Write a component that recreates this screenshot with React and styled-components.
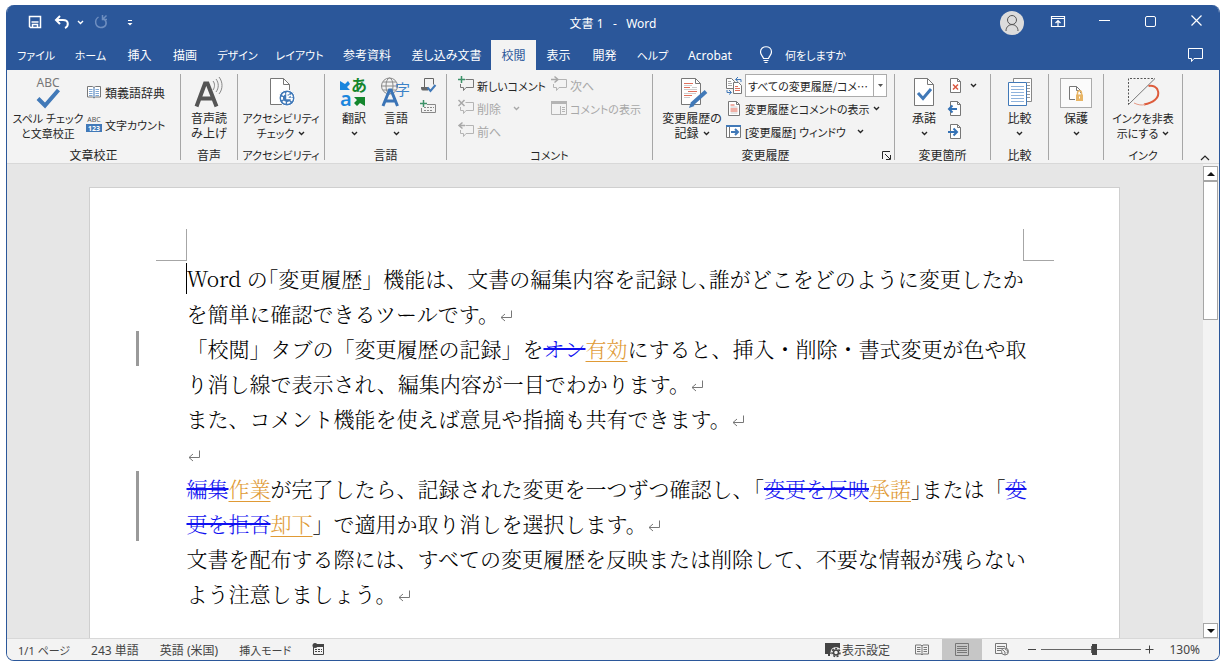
import styled, {createGlobalStyle} from "styled-components";
import {useState} from "react";

const GlobalStyle = createGlobalStyle`
    * {
        box-sizing: border-box;
    }

    body {
        margin: 0;
        background: #fff;
        font-family: "Noto Sans", "Noto Sans CJK JP", sans-serif;
        font-size: 12px;
        color: #262626;
    }

    button, select {
        font: inherit;
        color: inherit;
        border: none;
        background: none;
        padding: 0;
        margin: 0;
        cursor: pointer;
        font-feature-settings: "palt";
    }

    svg {
        display: block;
        flex: none;
        overflow: visible;
    }
`

const Screen = styled.div`
    height: 100vh;
    padding: 5px 7px 5px 6px;
`

const Window = styled.div`
    height: 100%;
    display: flex;
    flex-direction: column;
    border: 1px solid #2b579a;
    border-top: none;
    border-radius: 8px;
    overflow: hidden;
    background: #e6e6e6;
    font-feature-settings: "palt";
`

const TitleBar = styled.header`
    display: grid;
    grid-template-columns: 1fr auto 1fr;
    align-items: center;
    flex: none;
    height: 35px;
    background: #2b579a;
    color: #fff;
`

const QuickAccess = styled.div`
    display: flex;
    align-items: center;
    padding-left: 16px;
`

const QuickButton = styled.button`
    display: flex;
    align-items: center;
    justify-content: center;
    width: ${props => props.$width || 24}px;
    height: 24px;
    color: ${props => props.$dim ? "#6e8ec0" : "#fff"};
`

const Title = styled.div`
    white-space: pre;
    line-height: 16px;
    padding-top: 2px;
`

const WindowButtons = styled.div`
    display: flex;
    align-items: center;
    justify-content: flex-end;
`

const WindowButton = styled.button`
    display: flex;
    align-items: center;
    justify-content: center;
    width: 46px;
    height: 33px;
`

const Avatar = styled.button`
    width: 24px;
    height: 24px;
    margin-right: 11px;
    border-radius: 50%;
    background: #dcdcdc;
    display: flex;
    align-items: center;
    justify-content: center;
`

const TabBar = styled.nav`
    display: flex;
    flex: none;
    height: 30px;
    padding-left: 1px;
    background: #2b579a;
    color: #fff;
`

const Tab = styled.button`
    width: ${props => props.$width}px;
    height: 31px;
    flex: none;
    white-space: nowrap;
    font-size: ${props => props.$kana ? 11 : 12}px;
    line-height: 31px;

    &.active {
        background: #f3f3f3;
        color: #2b579a;
    }
`

const TellMe = styled.button`
    display: flex;
    align-items: center;
    gap: 12px;
    margin-left: 16px;
    font-size: 11px;
    white-space: nowrap;
`

const CommentButton = styled.button`
    margin-left: auto;
    width: 46px;
    display: flex;
    align-items: center;
    justify-content: center;
`

const Ribbon = styled.section`
    display: flex;
    flex: none;
    height: 94px;
    padding-top: 4px;
    background: #f3f3f3;
    border-bottom: 1px solid #d8d8d8;
`

const Group = styled.div`
    display: flex;
    flex-direction: column;
    flex: none;
    width: ${props => props.$width}px;
`

const GroupBody = styled.div`
    display: flex;
    justify-content: ${props => props.$start ? "flex-start" : "center"};
    padding-left: ${props => props.$start || 0}px;
    height: 74px;
`

const GroupLabel = styled.div`
    position: relative;
    font-size: ${props => props.$kana ? 11 : 12}px;
    line-height: 15px;
    text-align: center;
    white-space: nowrap;
    padding-right: ${props => props.$launcher ? 16 : 0}px;
`

const Separator = styled.div`
    flex: none;
    width: 1px;
    height: 86px;
    background: #a6a6a6;
`

const BigButton = styled.button`
    display: flex;
    flex-direction: column;
    align-items: center;
    flex: none;
    width: ${props => props.$width}px;
    padding-top: 1px;
    white-space: nowrap;
    font-size: ${props => props.$kana ? 11 : 12}px;
    line-height: 15px;
`

const BigIcon = styled.span`
    display: flex;
    align-items: center;
    justify-content: center;
    height: 36px;
`

const BigLine = styled.span`
    display: flex;
    align-items: center;
    gap: 4px;
    height: 15px;
`

const Column = styled.div`
    display: flex;
    flex-direction: column;
    gap: ${props => props.$gap || 0}px;
    padding-top: ${props => props.$top || 0}px;
    margin-left: ${props => props.$left || 0}px;
`

const SmallButton = styled.button`
    display: flex;
    align-items: center;
    gap: 3px;
    height: 23px;
    font-size: ${props => props.$kana ? 11 : 12}px;
    white-space: nowrap;

    &:disabled {
        color: #a8a8a8;
    }
`

const ComboRow = styled.div`
    display: flex;
    align-items: center;
    gap: 3px;
    height: 23px;
`

const Combo = styled.div`
    display: grid;
    grid-template-columns: 127px 13px;
    height: 23px;
    background: #fff;
    border: 1px solid #ababab;
`

const ComboSelect = styled.select`
    grid-area: 1 / 1 / 2 / 3;
    appearance: none;
    width: 140px;
    padding-left: 2px;
    font-family: "Noto Sans CJK JP", sans-serif;
    font-size: 11px;
    outline: none;
`

const ComboArrow = styled.span`
    grid-area: 1 / 2 / 2 / 3;
    display: flex;
    align-items: center;
    justify-content: center;
    border-left: 1px solid #ababab;
    pointer-events: none;
`

const Launcher = styled.button`
    position: absolute;
    right: 3px;
    top: 4px;
`

const ProtectBox = styled.span`
    display: flex;
    align-items: center;
    justify-content: center;
    width: 32px;
    height: 30px;
    border: 1px solid #ababab;
    background: #fbfbfb;
`

const Collapse = styled.button`
    margin: auto 9px 2px auto;
`

const Workspace = styled.main`
    display: flex;
    flex: 1;
    min-height: 0;
`

const Canvas = styled.div`
    flex: 1;
    min-width: 0;
    padding: 23px 2px 0 0;
    overflow: hidden;
    display: flex;
    justify-content: center;
`

const Page = styled.article`
    width: 100%;
    max-width: 1031px;
    background: #fff;
    border: 1px solid #cfcfcf;
    border-bottom: none;
    padding: 41px 65px 0 46px;
    overflow: hidden;
`

const CropMarks = styled.div`
    display: flex;
    justify-content: space-between;
    padding-left: 20px;
`

const CropMark = styled.span`
    width: 31px;
    height: 32px;
    border-bottom: 1px solid #a6a6a6;
    border-left: ${props => props.$right ? "1px solid #a6a6a6" : "none"};
    border-right: ${props => props.$right ? "none" : "1px solid #a6a6a6"};
`

const Paragraph = styled.p`
    margin: 0;
    color: #000;
    font-family: "Noto Serif CJK JP", "Noto Sans CJK JP", "Liberation Serif", serif;
    font-size: 21px;
    font-weight: 300;
    font-feature-settings: normal;
`

const Line = styled.span`
    display: block;
    height: 35px;
    padding: 2px 0 0 48px;
    line-height: 31px;
    white-space: nowrap;
    border-left: 3px solid ${props => props.$changed ? "#9a9a9a" : "transparent"};

    svg {
        display: inline-block;
        vertical-align: -5px;
    }
`

const Caret = styled.span`
    display: inline-block;
    width: 1px;
    height: 31px;
    margin-left: -1px;
    vertical-align: top;
    background: #000;
`

// half-width punctuation, used where a full line would run past the margin
const Tight = styled.span`
    font-feature-settings: "halt";
`

const Deleted = styled.del`
    color: #1010f0;
    text-decoration: line-through 2px;
`

const Inserted = styled.ins`
    color: #e09a35;
    text-decoration: underline 1px;
    text-underline-offset: 4px;
`

const ScrollBar = styled.div`
    display: flex;
    flex-direction: column;
    flex: none;
    width: 16px;
    padding-top: 2px;
    background: #f3f3f3;
`

const ScrollButton = styled.button`
    display: flex;
    align-items: center;
    justify-content: center;
    flex: none;
    width: 15px;
    height: 15px;
    background: #fff;
    border: 1px solid #a6a6a6;
`

const ScrollThumb = styled.div`
    width: 15px;
    height: 139px;
    margin-bottom: auto;
    background: #fff;
    border: 1px solid #a6a6a6;
`

const StatusBar = styled.footer`
    display: flex;
    align-items: center;
    flex: none;
    height: 22px;
    padding-left: 11px;
    padding-right: 19px;
    background: #f3f3f3;
    border-top: 1px solid #d8d8d8;
    color: #444;
    white-space: nowrap;
`

const StatusItem = styled.button`
    display: flex;
    align-items: center;
    height: 21px;
    margin-right: 21px;
    font-size: ${props => props.$kana ? 11 : 12}px;
`

const StatusRight = styled.div`
    display: flex;
    align-items: center;
    margin-left: auto;
`

const DisplaySettings = styled.button`
    display: flex;
    align-items: center;
    height: 21px;
    margin-right: 12px;
`

const ViewButton = styled.button`
    display: flex;
    align-items: center;
    justify-content: center;
    width: 40px;
    height: 21px;
    background: ${props => props.$active ? "#c6c6c6" : "none"};
`

const ZoomSlider = styled.input`
    appearance: none;
    width: 100px;
    height: 11px;
    margin: 0 4px;
    background: linear-gradient(#666, #666) center / 100% 1px no-repeat, linear-gradient(#666, #666) center / 1px 7px no-repeat;

    &::-webkit-slider-thumb {
        appearance: none;
        width: 5px;
        height: 11px;
        background: #444;
    }
`

const ZoomValue = styled.button`
    width: 34px;
    margin-left: 12px;
    text-align: right;
`

const tabs = [
    {title: "ファイル", width: 56, kana: true},
    {title: "ホーム", width: 53, kana: true},
    {title: "挿入", width: 45},
    {title: "描画", width: 46},
    {title: "デザイン", width: 59, kana: true},
    {title: "レイアウト", width: 65, kana: true},
    {title: "参考資料", width: 70},
    {title: "差し込み文書", width: 89},
    {title: "校閲", width: 45},
    {title: "表示", width: 45},
    {title: "開発", width: 47},
    {title: "ヘルプ", width: 49, kana: true},
    {title: "Acrobat", width: 66},
]

function Svg ({w, h, children}) {
    return (
        <svg width={w} height={h} viewBox={`0 0 ${w} ${h}`} fill="none" stroke="currentColor" aria-hidden="true">
            {children}
        </svg>
    )
}

function Chevron () {
    return <Svg w={7} h={5}><path d="M1 1l2.5 2.5L6 1" strokeWidth="1.4"/></Svg>
}

function SpellIcon () {
    return (
        <Svg w={30} h={34}>
            <text x="15" y="11" textAnchor="middle" fontSize="12" fill="#777" stroke="none">ABC</text>
            <path d="M5 22.500l7 7L25.500 14" stroke="#4179b8" strokeWidth="4"/>
        </Svg>
    )
}

function ThesaurusIcon () {
    return (
        <Svg w={16} h={16}>
            <path d="M1.500 1.500h5l1.500 1 1.500-1h5v10.500h-5l-1.500 1-1.500-1h-5z" fill="#fff" stroke="#777"/>
            <path d="M8 2.500v10" stroke="#4179b8"/>
            <path d="M3 4.500h3.500M3 6.500h3.500M3 8.500h3.500M3 10.500h3.500M9.500 4.500h3.500M9.500 6.500h3.500M9.500 8.500h3.500M9.500 10.500h3.500" stroke="#7ea6d3"/>
        </Svg>
    )
}

function WordCountIcon () {
    return (
        <Svg w={16} h={17}>
            <text x="8" y="6" textAnchor="middle" fontSize="7" fill="#555" stroke="none">ABC</text>
            <path d="M0 8h16v8H0z" fill="#4179b8" stroke="none"/>
            <text x="8" y="15" textAnchor="middle" fontSize="7" fontWeight="700" fill="#fff" stroke="none">123</text>
        </Svg>
    )
}

function ReadAloudIcon () {
    return (
        <Svg w={32} h={34}>
            <path d="M3.500 30.500L12 7.500h2.500L23.500 30.500M7 22.500h13" stroke="#555" strokeWidth="4"/>
            <path d="M20 5c2 2.500 2 6 0 9M23 3c3 4 3 9 0 13M26 1c4 5 4 12 0 17" stroke="#888"/>
        </Svg>
    )
}

function SheetIcon ({children}) {
    return (
        <Svg w={32} h={34}>
            <path d="M6.500 2.500h13l6 6v21h-19z" fill="#fff" stroke="#777"/>
            <path d="M19.500 2.500v6h6" stroke="#777"/>
            {children}
        </Svg>
    )
}

function AccessibilityIcon () {
    return (
        <Svg w={32} h={34}>
            <path d="M5.500 2.500h13l6 6v20h-19z" fill="#fff" stroke="#777"/>
            <path d="M18.500 2.500v6h6" stroke="#777"/>
            <circle cx="22" cy="22" r="8" fill="#4179b8" stroke="#fff"/>
            <circle cx="22" cy="22" r="5" stroke="#fff" strokeWidth="2" strokeDasharray="3 1.500"/>
            <path d="M22 17v5.500h5M22 22l3-3" stroke="#fff" strokeWidth="1.500"/>
        </Svg>
    )
}

function TranslateIcon () {
    return (
        <Svg w={32} h={34}>
            <text x="2" y="30" fontSize="20" fontWeight="600" fill="#1b86dd" stroke="none">a</text>
            <text x="13" y="15" fontSize="16" fontWeight="700" fill="#14862d" stroke="none">あ</text>
            <path d="M2 5v9h10l-3-3 3-3-2-3-3 3z" fill="#1b86dd" stroke="none"/>
            <path d="M27 30v-9H16l3 3-3 3 3 3 3-3z" fill="#14862d" stroke="none"/>
        </Svg>
    )
}

function LanguageIcon () {
    return (
        <Svg w={32} h={34}>
            <g stroke="#8a8a8a">
                <circle cx="9.500" cy="10" r="8"/>
                <ellipse cx="9.500" cy="10" rx="3.500" ry="8"/>
                <path d="M1.500 10h16M3 6h13M3 14h13"/>
            </g>
            <path d="M3 30L9.500 14h1.500l6.500 16M5.500 25h10" stroke="#3b74b6" strokeWidth="3"/>
            <text x="15" y="19" fontSize="15" fill="#3b82c8" stroke="none">字</text>
        </Svg>
    )
}

function ProofLanguageIcon () {
    return (
        <Svg w={16} h={16}>
            <path d="M4.500 9V.5h9v6" stroke="#666"/>
            <path d="M1 9h7v3.500H3c-2 0-2-2-2-3.500z" fill="#666" stroke="none"/>
            <path d="M7.500 9.500l3 3.500 5-6" stroke="#4179b8" strokeWidth="2"/>
        </Svg>
    )
}

function KeyboardIcon () {
    return (
        <Svg w={16} h={16}>
            <path d="M7 3.500h8.500v8H1.500V7" stroke="#888"/>
            <path d="M4 6.500h10M4 9.500h9" stroke="#888" strokeDasharray="2 1"/>
            <path d="M3.500 -1v7M0 2.500h7" stroke="#3c9168" strokeWidth="1.500"/>
        </Svg>
    )
}

// type: new | delete | prev | next
function CommentIcon ({type}) {
    const gray = type === "new" ? "#777" : "#b4b4b4"
    return (
        <Svg w={16} h={16}>
            <path d="M7.500 1.500h8v8H8l-2.500 3v-3h-3V6" stroke={gray}/>
            {type === "new" && <path d="M3.500 -2v7M0 1.500h7" stroke="#3c9168" strokeWidth="1.500"/>}
            {type === "delete" && <path d="M.5 -1l6 6M6.500 -1l-6 6" stroke="#a8a8a8" strokeWidth="1.500"/>}
            {type === "prev" && <path d="M4.500 -1.500L1 1.500l3.500 3M1 1.500h6" stroke="#a8a8a8" strokeWidth="1.500"/>}
            {type === "next" && <path d="M3.500 -1.500L7 1.500l-3.500 3M0 1.500h7" stroke="#a8a8a8" strokeWidth="1.500"/>}
        </Svg>
    )
}

function ShowCommentsIcon () {
    return (
        <Svg w={16} h={16}>
            <path d="M.5 .5h15v13H.5z" stroke="#b4b4b4"/>
            <path d="M0 0h16v3H0z" fill="#b4b4b4" stroke="none"/>
            <path d="M11 6.500h3M11 8.500h3M11 10.500h3M9.500 5v8" stroke="#b4b4b4"/>
        </Svg>
    )
}

function TrackIcon () {
    return (
        <Svg w={32} h={34}>
            <path d="M5.500 2.500h14l5 5v21h-19z" fill="#fff" stroke="#777"/>
            <path d="M19.500 2.500v5h5" stroke="#777"/>
            <path d="M8 7.500h9M8 11.500h6M12 15.500h9M8 19.500h8" stroke="#e0705c"/>
            <path d="M8 9.500h8M16 11.500h5M8 13.500h13M8 17.500h12M8 21.500h6" stroke="#ccc"/>
            <path d="M16 28L30 15.500" stroke="#4179b8" strokeWidth="4"/>
            <path d="M13 32l2-6 3.500 4z" fill="#4179b8" stroke="none"/>
        </Svg>
    )
}

function DisplayReviewIcon () {
    return (
        <Svg w={16} h={16}>
            <path d="M.5 .5h5l3 3v7h-8z" fill="#fff" stroke="#777"/>
            <path d="M7.500 4.500h5l3 3v8h-8z" fill="#fff" stroke="#777"/>
            <path d="M2 3.500h3M2 5.500h4M2 7.500h4" stroke="#aaa"/>
            <path d="M9 8.500h3M9 10.500h5M9 12.500h5" stroke="#e0705c"/>
            <path d="M15 4V1.500h-5M12 -1l-2.500 2.500 2.500 2M1 12v2.500h4M3 12l2.500 2.500L3 16.500" stroke="#4179b8"/>
        </Svg>
    )
}

function MarkupIcon () {
    return (
        <Svg w={16} h={16}>
            <path d="M2.500 .5h8l3 3v11h-11z" fill="#fff" stroke="#777"/>
            <path d="M10.500 .5v3h3" stroke="#777"/>
            <path d="M4.500 4h4M4.500 8h7M4.500 10h7" stroke="#e0604c"/>
            <path d="M4.500 6h7M4.500 12h7" stroke="#ccc"/>
        </Svg>
    )
}

function PaneIcon () {
    return (
        <Svg w={16} h={16}>
            <path d="M.5 1.500h14v12H.5z" fill="#fff" stroke="#777"/>
            <path d="M0 1h15v2H0z" fill="#4179b8" stroke="none"/>
            <path d="M3.500 3v10" stroke="#777"/>
            <path d="M5 8h7M9 5l3 3-3 3" stroke="#4179b8" strokeWidth="2"/>
        </Svg>
    )
}

// type: reject | prev | next
function ChangeIcon ({type}) {
    return (
        <Svg w={16} h={16}>
            <path d="M3.500 .5h7l3 3v11h-10z" fill="#fff" stroke="#777"/>
            <path d="M10.500 .5v3h3" stroke="#777"/>
            {type === "reject" && <path d="M6 6.500l5 5M11 6.500l-5 5" stroke="#d95740" strokeWidth="1.500"/>}
            {type === "prev" && <path d="M2.500 8H10M5.500 4.500L2 8l3.500 3.500" stroke="#3572b5" strokeWidth="2"/>}
            {type === "next" && <path d="M1 8h8.500M6.500 4.500L10 8l-3.500 3.500" stroke="#3572b5" strokeWidth="2"/>}
        </Svg>
    )
}

function CompareIcon () {
    return (
        <Svg w={32} h={34}>
            <path d="M9.500 2.500h18v23h-18z" fill="#fff" stroke="#888"/>
            <path d="M23 6.500h3M23 9.500h3M23 12.500h3M23 15.500h3M23 18.500h3M23 21.500h3" stroke="#999"/>
            <path d="M4.500 6.500h18v23h-18z" fill="#fff" stroke="#4179b8"/>
            <path d="M7 10.500h13M7 13.500h13M7 16.500h13M7 19.500h13M7 22.500h13M7 25.500h13" stroke="#8fb3dc"/>
        </Svg>
    )
}

function ProtectIcon () {
    return (
        <Svg w={16} h={16}>
            <path d="M7 14.500H1.500v-13h7l4 4V8" fill="#fff" stroke="#777"/>
            <path d="M8.500 1.500v4h4" stroke="#777"/>
            <path d="M9.500 10V8c0-3 4-3 4 0v2" stroke="#e8b565" strokeWidth="1.500"/>
            <path d="M8 9.500h7V16H8z" fill="#e8b565" stroke="none"/>
            <path d="M11.500 11.500v2" stroke="#fff"/>
        </Svg>
    )
}

function HideInkIcon () {
    return (
        <Svg w={34} h={34}>
            <path d="M2.500 29V2.500H29" stroke="#555" strokeDasharray="2 1.500"/>
            <path d="M2 29L29 2.500" stroke="#777"/>
            <path d="M18 28.500C27 27 34 22 32 15c-1-4-5-6-9.500-5" stroke="#dd5c3c" strokeWidth="2"/>
            <path d="M8 27c4 2 8 2.500 11 1.500" stroke="#e59a86"/>
        </Svg>
    )
}

function ReturnMark () {
    return (
        <svg width="21" height="21" viewBox="0 0 21 21" fill="none" stroke="#777" aria-hidden="true">
            <path d="M12.500 4.500v7H2M6 8l-4 3.500L6 15"/>
        </svg>
    )
}

function Big ({width, icon, lines, menu, kana}) {
    return (
        <BigButton $width={width} $kana={kana}>
            <BigIcon>{icon}</BigIcon>
            {lines.map((line, i) => (
                <BigLine key={line}>{line}{menu && i === 1 && <Chevron/>}</BigLine>
            ))}
            {menu && lines.length === 1 && <BigLine><Chevron/></BigLine>}
        </BigButton>
    )
}

function Header () {
    return (
        <TitleBar>
            <QuickAccess>
                <QuickButton aria-label="上書き保存">
                    <Svg w={14} h={14}>
                        <path d="M1.500 .5h11v11H2.500l-1-1z" strokeWidth="1.500"/>
                        <path d="M3.500 6h7M4.500 11.500V8.500h5v3" strokeWidth="1.500"/>
                    </Svg>
                </QuickButton>
                <QuickButton aria-label="元に戻す" $width={30}>
                    <Svg w={16} h={14}><path d="M6 0L2 4l4 4M2 4h7c6 0 6 6 2 8" strokeWidth="2"/></Svg>
                </QuickButton>
                <QuickButton aria-label="元に戻す一覧" $width={7}><Chevron/></QuickButton>
                <QuickButton aria-label="やり直し" $dim $width={34}>
                    <Svg w={14} h={14}><path d="M8.500 -1v4.500H13M8.500 3.500L12.500 -.5M4.500 1C0 4 1 11 6.500 11.500c6 0 7-5 4-8" strokeWidth="1.500"/></Svg>
                </QuickButton>
                <QuickButton aria-label="カスタマイズ">
                    <Svg w={6} h={8}><path d="M1 1.500h4" /><path d="M.5 4h5L3 6.500z" fill="currentColor" stroke="none"/></Svg>
                </QuickButton>
            </QuickAccess>
            <Title>文書 1   -   Word</Title>
            <WindowButtons>
                <Avatar aria-label="アカウント">
                    <Svg w={16} h={18}>
                        <g stroke="#555"><circle cx="8" cy="6" r="4.500"/><path d="M2 17C2 8.500 14 8.500 14 17"/></g>
                    </Svg>
                </Avatar>
                <WindowButton aria-label="リボンの表示オプション">
                    <Svg w={14} h={12}><path d="M.5 -.5h13v10H.5zM1 1.500h12M7 9V4M4.500 6L7 3.500 9.500 6" strokeWidth="1.200"/></Svg>
                </WindowButton>
                <WindowButton aria-label="最小化"><Svg w={11} h={11}><path d="M0 3.500h11"/></Svg></WindowButton>
                <WindowButton aria-label="最大化"><Svg w={11} h={11}><rect x=".5" y="-.5" width="10" height="10" rx="1.500"/></Svg></WindowButton>
                <WindowButton aria-label="閉じる"><Svg w={11} h={11}><path d="M.5 -1.500l10 10M10.500 -1.500l-10 10" strokeWidth="1.200"/></Svg></WindowButton>
            </WindowButtons>
        </TitleBar>
    )
}

function ReviewRibbon () {
    return (
        <Ribbon>
            <Group $width={173}>
                <GroupBody $start={5}>
                    <Big width={72} icon={<SpellIcon/>} lines={["スペル チェック", "と文章校正"]} kana/>
                    <Column $left={2} $top={7} $gap={9}>
                        <SmallButton><ThesaurusIcon/>類義語辞典</SmallButton>
                        <SmallButton $kana><WordCountIcon/>文字カウント</SmallButton>
                    </Column>
                </GroupBody>
                <GroupLabel>文章校正</GroupLabel>
            </Group>
            <Separator/>
            <Group $width={56}>
                <GroupBody><Big width={50} icon={<ReadAloudIcon/>} lines={["音声読", "み上げ"]}/></GroupBody>
                <GroupLabel>音声</GroupLabel>
            </Group>
            <Separator/>
            <Group $width={86}>
                <GroupBody><Big width={76} icon={<AccessibilityIcon/>} lines={["アクセシビリティ", "チェック"]} menu kana/></GroupBody>
                <GroupLabel $kana>アクセシビリティ</GroupLabel>
            </Group>
            <Separator/>
            <Group $width={121}>
                <GroupBody $start={8}>
                    <Big width={42} icon={<TranslateIcon/>} lines={["翻訳"]} menu/>
                    <Big width={42} icon={<LanguageIcon/>} lines={["言語"]} menu/>
                    <Column $left={3}>
                        <SmallButton aria-label="校正言語"><ProofLanguageIcon/></SmallButton>
                        <SmallButton aria-label="IME 辞書の更新"><KeyboardIcon/></SmallButton>
                    </Column>
                </GroupBody>
                <GroupLabel>言語</GroupLabel>
            </Group>
            <Separator/>
            <Group $width={205}>
                <GroupBody $start={11}>
                    <Column>
                        <SmallButton $kana><CommentIcon type="new"/>新しいコメント</SmallButton>
                        <SmallButton disabled><CommentIcon type="delete"/>削除&nbsp; &nbsp;<Chevron/></SmallButton>
                        <SmallButton disabled><CommentIcon type="prev"/>前へ</SmallButton>
                    </Column>
                    <Column $left={5}>
                        <SmallButton disabled><CommentIcon type="next"/>次へ</SmallButton>
                        <SmallButton disabled $kana><ShowCommentsIcon/>コメントの表示</SmallButton>
                    </Column>
                </GroupBody>
                <GroupLabel $kana>コメント</GroupLabel>
            </Group>
            <Separator/>
            <Group $width={241}>
                <GroupBody $start={6}>
                    <Big width={66} icon={<TrackIcon/>} lines={["変更履歴の", "記録"]} menu/>
                    <Column $left={1}>
                        <ComboRow>
                            <DisplayReviewIcon/>
                            <Combo>
                                <ComboSelect aria-label="変更内容の表示">
                                    <option>すべての変更履歴/コメ⋯</option>
                                </ComboSelect>
                                <ComboArrow><Svg w={5} h={3}><path d="M0 0h5L2.500 3z" fill="#555" stroke="none"/></Svg></ComboArrow>
                            </Combo>
                        </ComboRow>
                        <SmallButton $kana><MarkupIcon/>変更履歴とコメントの表示 <Chevron/></SmallButton>
                        <SmallButton $kana><PaneIcon/>[変更履歴] ウィンドウ&nbsp; &nbsp;<Chevron/></SmallButton>
                    </Column>
                </GroupBody>
                <GroupLabel $launcher>
                    変更履歴
                    <Launcher aria-label="変更履歴オプション">
                        <Svg w={9} h={9}><path d="M.5 7V-.5H8M3 2l5 5M8.500 3v4.500H4"/></Svg>
                    </Launcher>
                </GroupLabel>
            </Group>
            <Separator/>
            <Group $width={95}>
                <GroupBody $start={8}>
                    <Big width={42} icon={<SheetIcon><path d="M10 17l5 5.500L23 13" stroke="#4179b8" strokeWidth="3"/></SheetIcon>} lines={["承諾"]} menu/>
                    <Column $left={2}>
                        <SmallButton aria-label="元に戻す"><ChangeIcon type="reject"/><Svg w={1} h={4}/><Chevron/></SmallButton>
                        <SmallButton aria-label="前の変更箇所"><ChangeIcon type="prev"/></SmallButton>
                        <SmallButton aria-label="次の変更箇所"><ChangeIcon type="next"/></SmallButton>
                    </Column>
                </GroupBody>
                <GroupLabel>変更箇所</GroupLabel>
            </Group>
            <Separator/>
            <Group $width={57}>
                <GroupBody><Big width={42} icon={<CompareIcon/>} lines={["比較"]} menu/></GroupBody>
                <GroupLabel>比較</GroupLabel>
            </Group>
            <Separator/>
            <Group $width={54}>
                <GroupBody><Big width={42} icon={<ProtectBox><ProtectIcon/></ProtectBox>} lines={["保護"]} menu/></GroupBody>
            </Group>
            <Separator/>
            <Group $width={78}>
                <GroupBody><Big width={70} icon={<HideInkIcon/>} lines={["インクを非表", "示にする"]} menu kana/></GroupBody>
                <GroupLabel $kana>インク</GroupLabel>
            </Group>
            <Separator/>
            <Collapse aria-label="リボンを折りたたむ">
                <Svg w={10} h={6}><path d="M1 5l4-4 4 4" strokeWidth="1.200"/></Svg>
            </Collapse>
        </Ribbon>
    )
}

function DocumentPage () {
    return (
        <Page>
            <CropMarks><CropMark/><CropMark $right/></CropMarks>
            <Paragraph>
                <Line><Caret/>Word の<Tight>「</Tight>変更履歴」機能は、文書の編集内容を記録し<Tight>、</Tight>誰がどこをどのように変更したか</Line>
                <Line>を簡単に確認できるツールです。<ReturnMark/></Line>
            </Paragraph>
            <Paragraph>
                <Line $changed>「校閲」タブの「変更履歴の記録」を<Deleted>オン</Deleted><Inserted>有効</Inserted>にすると、挿入・削除・書式変更が色や取</Line>
                <Line>り消し線で表示され、編集内容が一目でわかります。<ReturnMark/></Line>
            </Paragraph>
            <Paragraph>
                <Line>また、コメント機能を使えば意見や指摘も共有できます。<ReturnMark/></Line>
            </Paragraph>
            <Paragraph><Line><ReturnMark/></Line></Paragraph>
            <Paragraph>
                <Line $changed><Deleted>編集</Deleted><Inserted>作業</Inserted>が完了したら、記録された変更を一つずつ確認し、「<Deleted>変更を反映</Deleted><Inserted>承諾</Inserted><Tight>」</Tight>または「<Deleted>変</Deleted></Line>
                <Line $changed><Deleted>更を拒否</Deleted><Inserted>却下</Inserted>」で適用か取り消しを選択します。<ReturnMark/></Line>
            </Paragraph>
            <Paragraph>
                <Line>文書を配布する際には、すべての変更履歴を反映または削除して、不要な情報が残らない</Line>
                <Line>よう注意しましょう。<ReturnMark/></Line>
            </Paragraph>
        </Page>
    )
}

function Footer () {
    const [zoom, setZoom] = useState(130)

    // 100% sits in the middle of the track, the right half goes up to 500%
    const position = zoom <= 100 ? (zoom - 10) / 90 * 50 : 50 + (zoom - 100) / 400 * 50

    function handleZoom (e) {
        const value = Number(e.target.value)
        setZoom(Math.round(value <= 50 ? 10 + value / 50 * 90 : 100 + (value - 50) / 50 * 400))
    }

    return (
        <StatusBar>
            <StatusItem $kana>1/1 ページ</StatusItem>
            <StatusItem>243 単語</StatusItem>
            <StatusItem>英語 (米国)</StatusItem>
            <StatusItem $kana>挿入モード</StatusItem>
            <StatusItem aria-label="マクロの記録">
                <Svg w={13} h={13}>
                    <path d="M1.500 3.500h10v8h-10z"/>
                    <path d="M1 1h11v3H1z" fill="currentColor" stroke="none"/>
                    <path d="M3 6.500h7M3 8.500h7" strokeDasharray="2 1"/>
                    <circle cx="3" cy="2.500" r="2.500" fill="currentColor" stroke="none"/>
                </Svg>
            </StatusItem>
            <StatusRight>
                <DisplaySettings>
                    <Svg w={17} h={16}>
                        <path d="M0 1h15v8H9v3H5v2H3v-2H0z" fill="#444" stroke="none"/>
                        <circle cx="11" cy="10.500" r="3" fill="#444" stroke="#f3f3f3" strokeWidth="5"/>
                        <circle cx="11" cy="10.500" r="2.500" fill="#f3f3f3" strokeWidth="1.500"/>
                        <circle cx="11" cy="10.500" r="4" strokeWidth="1.500" strokeDasharray="2 1.500"/>
                    </Svg>
                    表示設定
                </DisplaySettings>
                <ViewButton aria-label="閲覧モード">
                    <Svg w={14} h={12}>
                        <path d="M.5 1h5.500l1 1 1-1h5.500v9H8l-1 1-1-1H.5zM7 2v9M2 3.500h3.500M2 5.500h3.500M2 7.500h3.500M8.500 3.500H12M8.500 5.500H12M8.500 7.500H12" stroke="#777"/>
                    </Svg>
                </ViewButton>
                <ViewButton aria-label="印刷レイアウト" $active>
                    <Svg w={14} h={13}><path d="M.5 .5h13v12H.5zM2 3.500h10M2 5.500h10M2 7.500h10M2 9.500h10" stroke="#777"/></Svg>
                </ViewButton>
                <ViewButton aria-label="Web レイアウト">
                    <Svg w={14} h={13}>
                        <path d="M7 10.500H.5V.5h11V5M2 3.500h8M2 5.500h6M2 7.500h4" stroke="#777"/>
                        <circle cx="10" cy="8.500" r="3.500" fill="#eee" stroke="#777"/>
                        <path d="M8 7l2 2v3M10 6l3 2-1 2" stroke="#777"/>
                    </Svg>
                </ViewButton>
                <button aria-label="縮小"><Svg w={15} h={9}><path d="M6 4.500h8"/></Svg></button>
                <ZoomSlider type="range" min="0" max="100" step="any" value={position} onChange={handleZoom} aria-label="ズーム"/>
                <button aria-label="拡大"><Svg w={9} h={9}><path d="M.5 4.500h8M4.500 .5v8"/></Svg></button>
                <ZoomValue>{zoom}%</ZoomValue>
            </StatusRight>
        </StatusBar>
    )
}

export default function App () {
    const [tab, setTab] = useState("校閲")

    return (
        <Screen>
            <GlobalStyle/>
            <Window>
                <Header/>
                <TabBar>
                    {tabs.map(item => (
                        <Tab key={item.title} $width={item.width} $kana={item.kana} className={tab === item.title ? "active" : ""} onClick={() => setTab(item.title)}>{item.title}</Tab>
                    ))}
                    <TellMe>
                        <Svg w={14} h={18}>
                            <path d="M4.500 12.500C4 10 1.500 9 1.500 6c0-7 11-7 11 0 0 3-2.500 4-3 6.500zM4.500 14.500h5M5.500 16.500h3" strokeWidth="1.200"/>
                        </Svg>
                        何をしますか
                    </TellMe>
                    <CommentButton aria-label="コメント">
                        <Svg w={16} h={14}><path d="M.5 .5h14v10H6l-2.500 3v-3h-3z"/></Svg>
                    </CommentButton>
                </TabBar>
                <ReviewRibbon/>
                <Workspace>
                    <Canvas><DocumentPage/></Canvas>
                    <ScrollBar>
                        <ScrollButton aria-label="上へスクロール"><Svg w={8} h={4}><path d="M0 4h8L4 0z" fill="#111" stroke="none"/></Svg></ScrollButton>
                        <ScrollThumb/>
                        <ScrollButton aria-label="下へスクロール"><Svg w={8} h={4}><path d="M0 0h8L4 4z" fill="#111" stroke="none"/></Svg></ScrollButton>
                    </ScrollBar>
                </Workspace>
                <Footer/>
            </Window>
        </Screen>
    )
}
